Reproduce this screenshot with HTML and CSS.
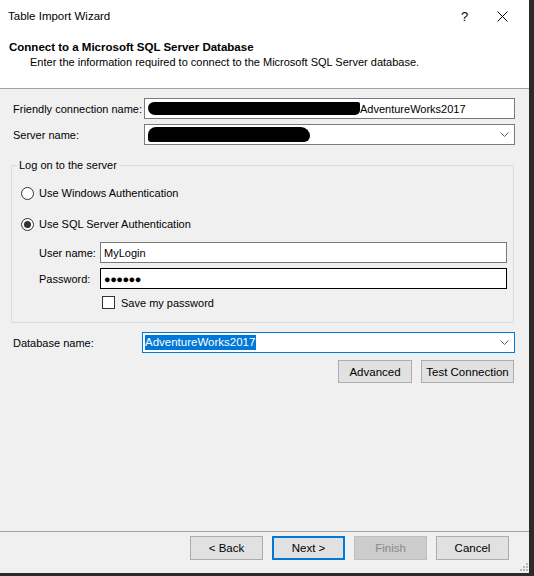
FILE: index.html
```html
<!DOCTYPE html>
<html>
<head>
<meta charset="utf-8">
<link rel="stylesheet" href="styles.css">
</head>
<body>
<div class="window">
  <div class="titlebar">
    <span class="title">Table Import Wizard</span>
    <span class="tb-help">?</span>
    <span class="tb-close"><svg width="11" height="11" viewBox="0 0 11 11"><path d="M0.5 0.5L10.5 10.5M10.5 0.5L0.5 10.5" stroke="#000" stroke-width="1" fill="none"/></svg></span>
  </div>
  <div class="header">
    <div class="h-title">Connect to a Microsoft SQL Server Database</div>
    <div class="h-sub">Enter the information required to connect to the Microsoft SQL Server database.</div>
  </div>
  <div class="content">
    <div class="row row-friendly">
      <label class="lbl">Friendly connection name:</label>
      <div class="field">
        <span class="redact redact-a"></span><span class="ftext">AdventureWorks2017</span>
      </div>
    </div>
    <div class="row row-server">
      <label class="lbl">Server name:</label>
      <div class="field combo">
        <span class="redact redact-b"></span>
        <span class="chev"><svg width="9" height="5" viewBox="0 0 9 5"><path d="M0.5 0.5L4.5 4.5L8.5 0.5" stroke="#606060" fill="none"/></svg></span>
      </div>
    </div>
    <fieldset class="group">
      <legend>Log on to the server</legend>
      <div class="radio-row r1"><span class="radio"></span><span>Use Windows Authentication</span></div>
      <div class="radio-row r2"><span class="radio on"><span class="dot"></span></span><span>Use SQL Server Authentication</span></div>
      <div class="sub-row sr1">
        <label class="sublbl">User name:</label>
        <div class="field sub">MyLogin</div>
      </div>
      <div class="sub-row sr2">
        <label class="sublbl">Password:</label>
        <div class="field sub focus"><span class="pw">●●●●●●</span></div>
      </div>
      <div class="check-row"><span class="check"></span><span>Save my password</span></div>
    </fieldset>
    <div class="row row-db">
      <label class="lbl">Database name:</label>
      <div class="field combo active">
        <span class="sel">AdventureWorks2017</span>
        <span class="chev"><svg width="9" height="5" viewBox="0 0 9 5"><path d="M0.5 0.5L4.5 4.5L8.5 0.5" stroke="#606060" fill="none"/></svg></span>
      </div>
    </div>
    <div class="btn-row">
      <button class="btn b-adv">Advanced</button>
      <button class="btn b-test">Test Connection</button>
    </div>
  </div>
  <div class="footer">
    <button class="btn fbtn">&lt; Back</button>
    <button class="btn fbtn default">Next &gt;</button>
    <button class="btn fbtn disabled">Finish</button>
    <button class="btn fbtn">Cancel</button>
    <span class="grip"><svg width="8" height="8" viewBox="0 0 8 8" fill="#b8b8b8"><rect x="6" y="0" width="2" height="2"/><rect x="3" y="3" width="2" height="2"/><rect x="6" y="3" width="2" height="2"/><rect x="0" y="6" width="2" height="2"/><rect x="3" y="6" width="2" height="2"/><rect x="6" y="6" width="2" height="2"/></svg></span>
  </div>
</div>
</body>
</html>
```
FILE: styles.css
```css
html, body { margin: 0; padding: 0; }
body {
  background: #2b2b2b;
  width: 534px;
  height: 576px;
  overflow: hidden;
  font-family: "Liberation Sans", Arial, sans-serif;
  font-size: 11px;
  color: #000;
}
.window {
  width: 529px;
  height: 573px;
  background: #f0f0f0;
  display: flex;
  flex-direction: column;
  position: relative;
  white-space: nowrap;
}
.titlebar {
  height: 32px;
  background: #fff;
  display: flex;
  align-items: center;
  padding-left: 8px;
  box-sizing: border-box;
}
.title { flex: 1; font-size: 11.5px; }
.tb-help { width: 36px; font-size: 13px; }
.tb-close { width: 32px; display: flex; align-items: center; padding-top: 1px; }
.header {
  height: 57px;
  background: #fff;
  border-bottom: 1px solid #a0a0a0;
  box-sizing: border-box;
  padding: 8px 0 0 9px;
}
.h-title { font-weight: bold; font-size: 11.5px; line-height: 14px; }
.h-sub { padding-left: 21px; line-height: 15px; font-size: 11px; margin-top: 1px; }
.content {
  flex: 1;
  padding: 9px 0 0 0;
  border-bottom: 1px solid #a0a0a0;
}
.row { display: flex; align-items: center; padding-left: 13px; }
.lbl { width: 131px; flex: none; }
.field {
  box-sizing: border-box;
  height: 21px;
  background: #fff;
  border: 1px solid #7a7a7a;
  display: flex;
  align-items: center;
  padding-left: 2px;
  overflow: hidden;
  flex: none;
}
.row .field { width: 371px; }
.row-server { margin-top: 5px; }
.row-db { margin-top: 9px; padding-left: 13px; }
.row-db .lbl { width: 129px; }
.row-db .field { width: 373px; }
.combo { position: relative; }
.chev { position: absolute; right: 5px; top: 7px; display: block; line-height: 0; }
.active { border-color: #0078d7; }
.sel { background: #0078d7; color: #fff; line-height: 15px; padding-right: 1px; font-size: 11.5px; }
.redact { display: inline-block; background: #000; flex: none; }
.redact-a { width: 212px; height: 13px; border-radius: 6px 2px 5px 7px; margin-left: 1px; }
.redact-b { width: 162px; height: 15px; border-radius: 8px 9px 6px 3px; margin-left: 1px; }
.ftext { font-size: 11px; }
.group {
  margin: 14px 0 0 11px;
  width: 503px;
  height: 164px;
  box-sizing: border-box;
  border: 1px solid #dcdcdc;
  padding: 0;
  position: relative;
}
.group legend { padding: 0 2px; margin-left: 5px; line-height: 12px; }
.radio-row { display: flex; align-items: center; margin-left: 9px; height: 14px; }
.r1 { margin-top: 15px; }
.r2 { margin-top: 17px; }
.radio {
  width: 13px; height: 13px; box-sizing: border-box;
  border: 1px solid #333; border-radius: 50%; background: #fff;
  margin-right: 5px; display: flex; align-items: center; justify-content: center;
}
.dot { width: 7px; height: 7px; border-radius: 50%; background: #333; }
.sub-row { display: flex; align-items: center; margin-left: 27px; }
.sr1 { margin-top: 11px; }
.sr2 { margin-top: 5px; }
.sublbl { width: 61px; flex: none; }
.field.sub { width: 407px; padding-left: 3px; }
.focus { border-color: #000; }
.pw { font-size: 11px; letter-spacing: -0.5px; }
.check-row { display: flex; align-items: center; margin: 7px 0 0 90px; }
.check { width: 13px; height: 13px; box-sizing: border-box; border: 1px solid #333; background: #fff; margin-right: 6px; }
.btn-row { display: flex; justify-content: flex-end; gap: 9px; margin: 7px 15px 0 0; }
.btn {
  font-family: "Liberation Sans", Arial, sans-serif;
  font-size: 11.5px;
  background: #e1e1e1;
  border: 1px solid #adadad;
  box-sizing: border-box;
  color: #000;
  padding: 0;
  margin: 0;
}
.b-adv { width: 74px; height: 23px; }
.b-test { width: 93px; height: 23px; }
.footer {
  height: 41px;
  display: flex;
  gap: 9px;
  padding: 4px 0 0 190px;
  box-sizing: border-box;
  position: relative;
}
.fbtn { width: 73px; height: 24px; }
.default { border: 2px solid #0078d7; }
.disabled { background: #cccccc; border-color: #bfbfbf; color: #8a8a8a; }
.grip { position: absolute; right: 1px; bottom: 2px; line-height: 0; }
```
